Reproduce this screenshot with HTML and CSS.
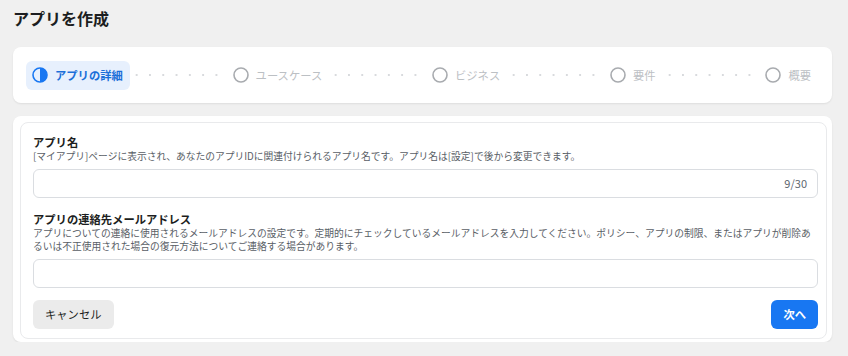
FILE: index.html
```html
<!DOCTYPE html>
<html lang="ja">

<head>
    <meta charset="UTF-8">
    <meta name="viewport" content="width=device-width, initial-scale=1.0">
    <title>アプリを作成</title>
    <link rel="stylesheet" href="styles.css">
</head>

<body>
    <div class="page">
        <h1 class="title">アプリを作成</h1>

        <!-- ステップ -->
        <div class="stepper">
            <div class="step active">
                <svg class="step-icon" viewBox="0 0 16 16" width="16" height="16">
                    <circle cx="8" cy="8" r="7" fill="none" stroke="#1877f2" stroke-width="1.6"></circle>
                    <path d="M8 1 A7 7 0 0 1 8 15 Z" fill="#1877f2"></path>
                </svg>
                <span>アプリの詳細</span>
            </div>
            <span class="dots"></span>
            <div class="step">
                <svg class="step-icon" viewBox="0 0 16 16" width="16" height="16">
                    <circle cx="8" cy="8" r="7" fill="none" stroke="#a8abaf" stroke-width="1.6"></circle>
                </svg>
                <span>ユースケース</span>
            </div>
            <span class="dots"></span>
            <div class="step">
                <svg class="step-icon" viewBox="0 0 16 16" width="16" height="16">
                    <circle cx="8" cy="8" r="7" fill="none" stroke="#a8abaf" stroke-width="1.6"></circle>
                </svg>
                <span>ビジネス</span>
            </div>
            <span class="dots"></span>
            <div class="step">
                <svg class="step-icon" viewBox="0 0 16 16" width="16" height="16">
                    <circle cx="8" cy="8" r="7" fill="none" stroke="#a8abaf" stroke-width="1.6"></circle>
                </svg>
                <span>要件</span>
            </div>
            <span class="dots"></span>
            <div class="step">
                <svg class="step-icon" viewBox="0 0 16 16" width="16" height="16">
                    <circle cx="8" cy="8" r="7" fill="none" stroke="#a8abaf" stroke-width="1.6"></circle>
                </svg>
                <span>概要</span>
            </div>
        </div>

        <!-- フォーム -->
        <div class="panel">
            <div class="form">
                <div class="field">
                    <div class="label">アプリ名</div>
                    <div class="desc">[マイアプリ]ページに表示され、あなたのアプリIDに関連付けられるアプリ名です。アプリ名は[設定]で後から変更できます。</div>
                    <div class="input">
                        <span class="count">9/30</span>
                    </div>
                </div>
                <div class="field">
                    <div class="label">アプリの連絡先メールアドレス</div>
                    <div class="desc">アプリについての連絡に使用されるメールアドレスの設定です。定期的にチェックしているメールアドレスを入力してください。ポリシー、アプリの制限、またはアプリが削除あるいは不正使用された場合の復元方法についてご連絡する場合があります。</div>
                    <div class="input"></div>
                </div>
                <div class="actions">
                    <button class="btn cancel">キャンセル</button>
                    <button class="btn next">次へ</button>
                </div>
            </div>
        </div>
    </div>
</body>

</html>
```

FILE: styles.css
```css
* {
    margin: 0;
    padding: 0;
    box-sizing: border-box;
}

body {
    background-color: #f0f0f0;
    font-family: "Noto Sans CJK JP", "Noto Sans", sans-serif;
    color: #1c1e21;
}

.page {
    padding: 8px 16px 0 13px;
}

.title {
    font-size: 16px;
    line-height: 20px;
    font-weight: 700;
}

/* ステップ */
.stepper {
    display: flex;
    align-items: center;
    height: 56px;
    margin-top: 19px;
    padding: 0 14px 0 13px;
    background-color: #fff;
    border-radius: 8px;
    box-shadow: 0 1px 2px rgba(0, 0, 0, 0.08);
}

.step {
    display: flex;
    align-items: center;
    gap: 7px;
    height: 29px;
    padding: 0 7px 0 6px;
    border-radius: 6px;
    font-size: 11.3px;
    color: #bcc0c4;
    white-space: nowrap;
}

.step-icon {
    display: block;
    flex-shrink: 0;
}

.step.active {
    background-color: #e7f0fd;
    color: #1b6fd9;
    font-weight: 700;
}

.dots {
    flex: 1;
    height: 4px;
    background-image: radial-gradient(circle, #d8dadd 1px, transparent 1.4px);
    background-size: 13.3px 4px;
    background-repeat: repeat-x;
}

/* フォーム */
.panel {
    margin-top: 13px;
    padding: 6px 5px 3px 7px;
    background-color: #fff;
    border-radius: 8px;
    box-shadow: 0 1px 2px rgba(0, 0, 0, 0.08);
}

.form {
    padding: 12px 8px 9px 12px;
    border: 1px solid #e9eaec;
    border-radius: 8px;
}

.field + .field {
    margin-top: 14px;
}

.label {
    font-size: 11.3px;
    line-height: 15px;
    font-weight: 700;
}

.desc {
    font-size: 9.75px;
    line-height: 13.5px;
    color: #595e66;
}

.input {
    display: flex;
    align-items: center;
    justify-content: flex-end;
    height: 29px;
    margin-top: 5px;
    padding: 0 10px;
    border: 1px solid #dadde1;
    border-radius: 6px;
}

.count {
    font-size: 11px;
    color: #606770;
}

.actions {
    display: flex;
    justify-content: space-between;
    margin-top: 12px;
}

.btn {
    height: 29px;
    padding: 0 12px;
    border: none;
    border-radius: 6px;
    font-family: inherit;
    font-size: 11.3px;
}

.cancel {
    background-color: #ebebeb;
    color: #1c1e21;
}

.next {
    background-color: #1877f2;
    color: #fff;
    font-weight: 700;
}
```
